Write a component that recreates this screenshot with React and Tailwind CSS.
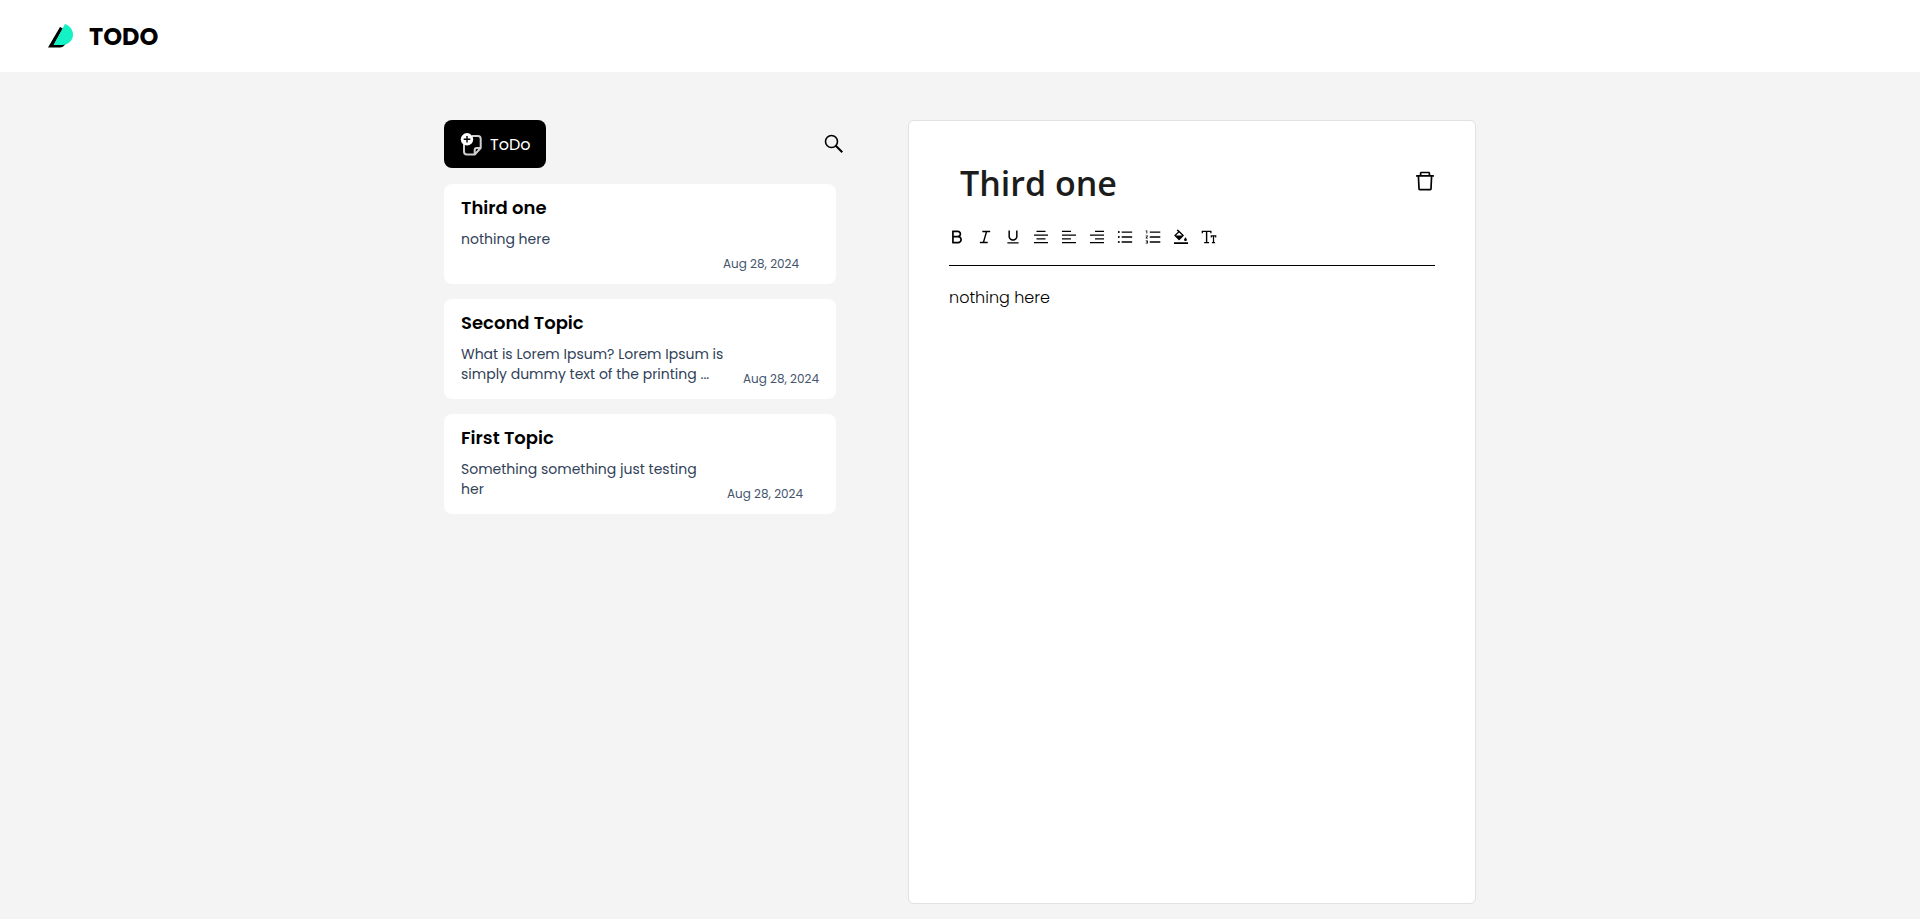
import { useState } from "react";
import {
  AiOutlineAlignCenter,
  AiOutlineAlignLeft,
  AiOutlineAlignRight,
  AiOutlineBgColors,
  AiOutlineBold,
  AiOutlineDelete,
  AiOutlineFontSize,
  AiOutlineItalic,
  AiOutlineOrderedList,
  AiOutlineUnderline,
  AiOutlineUnorderedList,
} from "react-icons/ai";

const notes = [
  { title: "Third one", body: "nothing here", date: "Aug 28, 2024", width: "w-[246px]" },
  {
    title: "Second Topic",
    body: "What is Lorem Ipsum? Lorem Ipsum is simply dummy text of the printing ...",
    date: "Aug 28, 2024",
    width: "w-[266px]",
  },
  { title: "First Topic", body: "Something something just testing her", date: "Aug 28, 2024", width: "w-[250px]" },
];

const tools = [
  ["Bold", AiOutlineBold],
  ["Italic", AiOutlineItalic],
  ["Underline", AiOutlineUnderline],
  ["Align center", AiOutlineAlignCenter],
  ["Align left", AiOutlineAlignLeft],
  ["Align right", AiOutlineAlignRight],
  ["Bulleted list", AiOutlineUnorderedList],
  ["Numbered list", AiOutlineOrderedList],
  ["Background color", AiOutlineBgColors],
  ["Font size", AiOutlineFontSize],
];

function Logo() {
  return (
    <svg viewBox="0 0 25 24" className="h-6 w-[25px]" aria-hidden="true">
      <path d="M12 3 L0 23.5 H12 Q15 23.5 17.5 20 L6 20.5 L15 4.5 Z" fill="#000" />
      <path d="M17 0 C22 2 25 6 25 10.5 C25 16.5 20 21 14 21 H5.5 Z" fill="#14f1c4" />
    </svg>
  );
}

function SearchIcon() {
  return (
    <svg viewBox="0 0 24 24" className="size-6 shrink-0" fill="none" stroke="#000" aria-hidden="true">
      <circle cx="9.5" cy="9.5" r="6" strokeWidth="1.6" />
      <path d="M13.8 13.8 L20.3 20.3" strokeWidth="2" />
    </svg>
  );
}

function NoteIcon() {
  return (
    <svg viewBox="0 0 22 24" className="h-6 w-[22px]" fill="none" aria-hidden="true">
      <path
        d="M12 4 H18 Q20.7 4 20.7 6.8 V16 L14.7 22.5 H6.8 Q4 22.5 4 19.5 V12 M20.7 16 H16.7 Q14.7 16 14.7 18 V22.5"
        stroke="#d0d0d0"
        strokeWidth="2"
        strokeLinejoin="round"
      />
      <circle cx="7" cy="7.3" r="6.2" fill="#fff" />
      <path d="M7 4 V10.6 M3.7 7.3 H10.3" stroke="#000" strokeWidth="1.4" />
    </svg>
  );
}

export default function App() {
  const [title, setTitle] = useState("Third one");
  return (
    <div className="flex min-h-screen flex-col bg-[#f4f4f4] font-['Poppins','Inter',sans-serif] text-black">
      <header className="flex h-18 items-center gap-4 bg-white px-12">
        <Logo />
        <span className="text-2xl leading-[normal] font-bold">TODO</span>
      </header>
      <main className="mx-auto flex w-full max-w-[1032px] grow gap-16 pt-12 pb-[15px]">
        <section className="flex w-[400px] shrink-0 flex-col gap-4">
          <div className="flex items-center justify-between">
            <button className="flex h-12 items-center gap-2 rounded-lg bg-black px-4 text-white">
              <NoteIcon />
              <span className="leading-[normal]">ToDo</span>
            </button>
            <button aria-label="Search" className="flex size-5 items-center justify-center">
              <SearchIcon />
            </button>
          </div>
          <ul className="flex flex-col gap-[15px] pr-2">
            {notes.map((n) => (
              <li key={n.title} className="h-25 rounded-lg bg-white px-[17px] pt-2.5">
                <h2 className="text-lg leading-7 font-semibold">{n.title}</h2>
                <div className="flex gap-4 pt-[7px]">
                  <p className={`h-[43px] text-sm leading-5 text-slate-700 ${n.width}`}>{n.body}</p>
                  <time className="self-end text-xs leading-4 whitespace-nowrap text-slate-600">{n.date}</time>
                </div>
              </li>
            ))}
          </ul>
        </section>
        <section className="min-w-0 grow rounded-md border border-[#e2e2e2] bg-white px-10 pt-[30px]">
          <div className="flex items-start justify-between">
            <input
              aria-label="Title"
              value={title}
              onChange={(e) => setTitle(e.target.value)}
              className="h-16 min-w-0 grow px-[11px] font-['Segoe_UI','Open_Sans',sans-serif] text-[34px] font-semibold text-[#1c1c1c] outline-none"
            />
            <button aria-label="Delete" className="flex h-15 w-5 items-center justify-center">
              <AiOutlineDelete className="size-6 shrink-0" />
            </button>
          </div>
          <div className="flex gap-3 border-b border-black pt-3.5 pb-5">
            {tools.map(([label, Icon]) => (
              <button key={label} aria-label={label} className="flex size-4 items-center justify-center">
                <Icon className="size-[18px] shrink-0" />
              </button>
            ))}
          </div>
          <p className="pt-5 leading-6 font-light">nothing here</p>
        </section>
      </main>
    </div>
  );
}
